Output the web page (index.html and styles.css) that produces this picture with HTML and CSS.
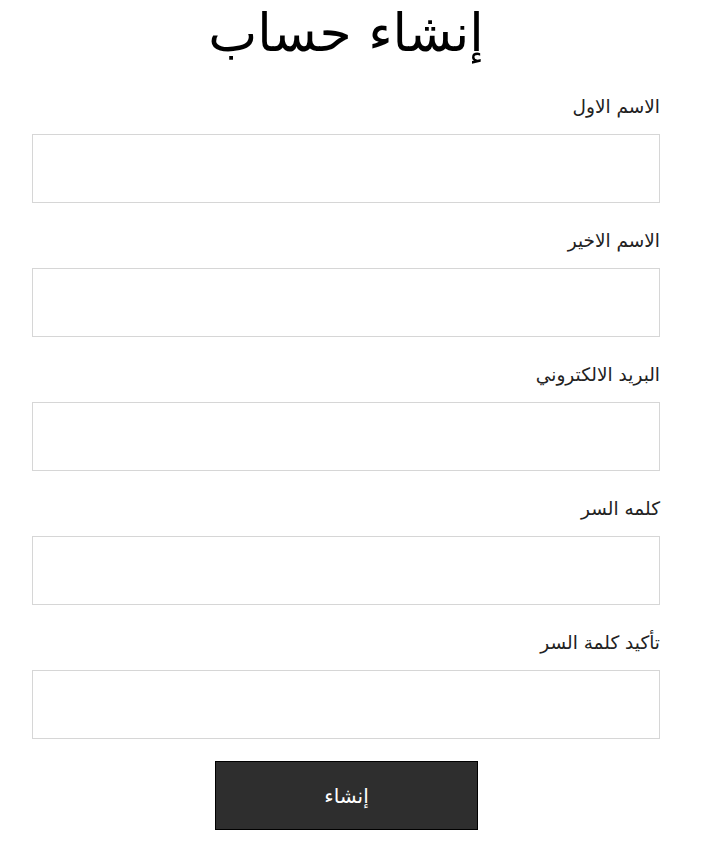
FILE: index.html
```html
<!DOCTYPE html>
<html lang="ar" dir="rtl">
<head>
<meta charset="utf-8">
<title>إنشاء حساب</title>
<link rel="stylesheet" href="styles.css">
</head>
<body>
<main class="page">
  <h1 class="title">إنشاء حساب</h1>
  <form class="form">
    <div class="field">
      <label class="label" for="f1">الاسم الاول</label>
      <input class="input" id="f1" type="text">
    </div>
    <div class="field">
      <label class="label" for="f2">الاسم الاخير</label>
      <input class="input" id="f2" type="text">
    </div>
    <div class="field">
      <label class="label" for="f3">البريد الالكتروني</label>
      <input class="input" id="f3" type="email">
    </div>
    <div class="field">
      <label class="label" for="f4">كلمه السر</label>
      <input class="input" id="f4" type="password">
    </div>
    <div class="field">
      <label class="label" for="f5">تأكيد كلمة السر</label>
      <input class="input" id="f5" type="password">
    </div>
    <div class="actions">
      <button class="submit" type="button">إنشاء</button>
    </div>
  </form>
</main>
</body>
</html>
```

FILE: styles.css
```css
html, body {
  margin: 0;
  padding: 0;
  background: #ffffff;
}
body {
  font-family: "DejaVu Sans", "Noto Sans", sans-serif;
  color: #111111;
}
.page {
  padding: 0 50px 0 32px;
}
.title {
  margin: 0;
  height: 69px;
  font-size: 52px;
  font-weight: normal;
  line-height: 66px;
  text-align: center;
  color: #000000;
}
.form {
  display: flex;
  flex-direction: column;
}
.field {
  display: flex;
  flex-direction: column;
  margin-top: 25px;
}
.label {
  display: block;
  font-size: 18.5px;
  line-height: 26px;
  height: 26px;
  margin-bottom: 14px;
  color: #222222;
}
.input {
  box-sizing: border-box;
  width: 100%;
  height: 69px;
  border: 1px solid #d6d6d6;
  background: #ffffff;
  margin: 0;
  padding: 0 12px;
  outline: none;
}
.actions {
  display: flex;
  justify-content: center;
  margin-top: 22px;
}
.submit {
  box-sizing: border-box;
  width: 263px;
  height: 69px;
  margin-left: 1px;
  background: #2e2e2e;
  border: 1px solid #000000;
  color: #ffffff;
  font-family: "DejaVu Sans", "Noto Sans", sans-serif;
  font-size: 20px;
  cursor: pointer;
}
```
